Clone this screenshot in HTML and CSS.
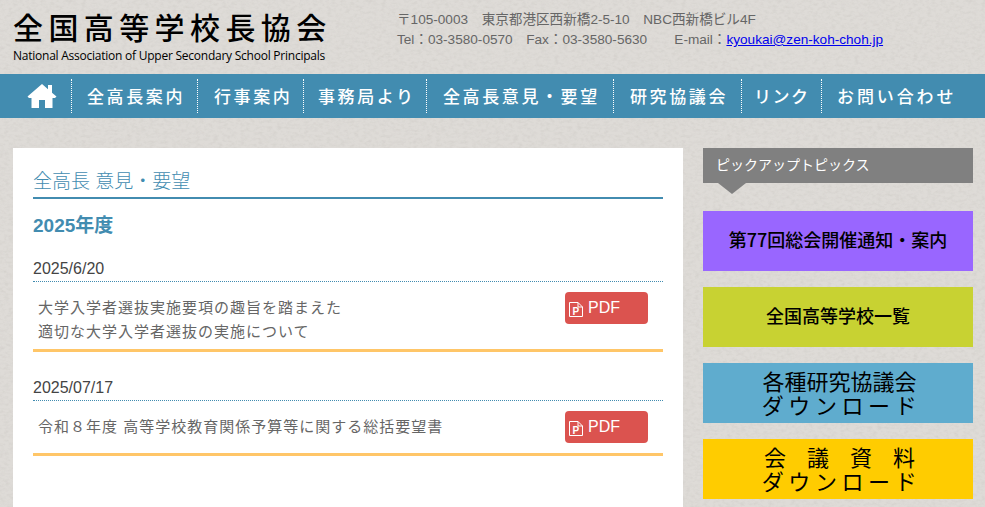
FILE: index.html
```html
<!DOCTYPE html>
<html lang="ja">
  <head>
    <meta charset="UTF-8">
    <title>全国高等学校長協会</title>
    <link rel="stylesheet" href="styles.css">
  </head>
  <body>
    <header class="masthead">
      <div class="logo">
        <div class="logo-name">全国高等学校長協会</div>
        <div class="logo-sub">National Association of Upper Secondary School Principals</div>
      </div>
      <address class="contact">
        <p>〒105-0003　東京都港区西新橋2-5-10　NBC西新橋ビル4F</p>
        <p>Tel：03-3580-0570　Fax：03-3580-5630　　E-mail：<a href="#">kyoukai@zen-koh-choh.jp</a></p>
      </address>
    </header>

    <nav class="gnav">
      <a class="gnav-home" href="#" aria-label="ホーム">
        <svg width="30" height="26" viewBox="0 0 30 26"><path fill="#fff" d="M15 1 L21 6.2 V2 H25 V9.7 L29.5 13.6 L28 15 H25.5 V25 H18 V17 H12 V25 H4.5 V15 H2 L.5 13.6 Z"/></svg>
      </a>
      <a class="gnav-item w1" href="#">全高長案内</a>
      <a class="gnav-item w2" href="#">行事案内</a>
      <a class="gnav-item w3" href="#">事務局より</a>
      <a class="gnav-item w4" href="#">全高長意見・要望</a>
      <a class="gnav-item w5" href="#">研究協議会</a>
      <a class="gnav-item w6" href="#">リンク</a>
      <a class="gnav-item w7" href="#">お問い合わせ</a>
    </nav>

    <div class="wrap">
      <main class="content">
        <h1 class="page-title">全高長 意見・要望</h1>
        <h2 class="year">2025年度</h2>

        <h3 class="date">2025/6/20</h3>
        <div class="entry">
          <p class="entry-text">大学入学者選抜実施要項の趣旨を踏まえた<br>適切な大学入学者選抜の実施について</p>
          <a class="pdf" href="#">
            <svg class="pdf-icon" width="14" height="15" viewBox="0 0 14 15"><path fill="none" stroke="#fff" d="M.5 .5 H9 L13.5 5 V14.5 H.5 Z M9 .5 V5 H13.5"/><text x="3.5" y="12.5" font-family="Liberation Sans" font-size="10" font-weight="700" fill="#fff">P</text></svg>
            PDF
          </a>
        </div>

        <h3 class="date date-next">2025/07/17</h3>
        <div class="entry entry-short">
          <p class="entry-text">令和８年度 高等学校教育関係予算等に関する総括要望書</p>
          <a class="pdf" href="#">
            <svg class="pdf-icon" width="14" height="15" viewBox="0 0 14 15"><path fill="none" stroke="#fff" d="M.5 .5 H9 L13.5 5 V14.5 H.5 Z M9 .5 V5 H13.5"/><text x="3.5" y="12.5" font-family="Liberation Sans" font-size="10" font-weight="700" fill="#fff">P</text></svg>
            PDF
          </a>
        </div>
      </main>

      <aside class="side">
        <div class="side-title">ピックアップトピックス</div>
        <a class="banner purple" href="#">第77回総会開催通知・案内</a>
        <a class="banner olive" href="#">全国高等学校一覧</a>
        <a class="banner blue big" href="#">各種研究協議会<br><span class="wide">ダウンロード</span></a>
        <a class="banner yellow big" href="#"><span class="wider">会議資料</span><br><span class="wide">ダウンロード</span></a>
      </aside>
    </div>
  </body>
</html>
```

FILE: styles.css
```css
html { margin: 0; padding: 0; height: 100%; overflow: hidden; }
body {
  margin: 0;
  height: 100%;
  overflow: hidden;
  color: #666;
  background-color: #dedbd7;
  background-image: url("data:image/svg+xml,%3Csvg xmlns='http://www.w3.org/2000/svg' width='300' height='300'%3E%3Cfilter id='n'%3E%3CfeTurbulence type='fractalNoise' baseFrequency='.22 .34' numOctaves='3' seed='4'/%3E%3CfeColorMatrix values='0 0 0 0 .5 0 0 0 0 .48 0 0 0 0 .45 .35 .35 0 0 -.3'/%3E%3C/filter%3E%3Crect width='300' height='300' filter='url(%23n)'/%3E%3C/svg%3E");
  font-family: "Liberation Sans", "Noto Sans CJK JP", sans-serif;
  font-size: 14px;
}
a { text-decoration: none; }
p, h1, h2, h3 { margin: 0; font-weight: normal; }

.masthead { display: flex; height: 74px; box-sizing: border-box; padding-left: 13px; }
.logo { width: 384px; color: #000; }
.logo-name {
  padding-top: 8px;
  height: 37px;
  font-family: "Noto Sans CJK JP", sans-serif;
  font-size: 30px;
  font-weight: 500;
  line-height: 37px;
  letter-spacing: 5.4px;
  white-space: nowrap;
}
.logo-sub { padding-top: 3px; font-family: "Open Sans", sans-serif; font-size: 12px; line-height: 16px; letter-spacing: -.24px; white-space: nowrap; }
.contact { padding-top: 10px; font-size: 13.6px; font-style: normal; line-height: 20px; white-space: nowrap; }
.contact a { color: #00e; text-decoration: underline; }

.gnav { display: flex; height: 44px; align-items: center; background: #428cb0; }
.gnav-home { display: flex; align-items: center; justify-content: center; box-sizing: border-box; width: 71px; padding-left: 13px; height: 34px; }
.gnav-item {
  box-sizing: border-box;
  height: 34px;
  line-height: 34px;
  border-left: 1px dotted #fff;
  padding-left: 15px;
  color: #fff;
  font-family: "Noto Sans CJK JP", sans-serif;
  font-size: 17px;
  font-weight: 500;
  letter-spacing: 2.6px;
  white-space: nowrap;
}
.w1 { width: 126px; }
.w2 { width: 106px; padding-left: 16px; }
.w3 { width: 123px; padding-left: 14px; }
.w4 { width: 187px; padding-left: 16px; }
.w5 { width: 128px; padding-left: 16px; }
.w6 { width: 80px; letter-spacing: 1.5px; padding-left: 12px; }
.w7 { flex: 1; letter-spacing: 2.9px; }

.wrap { display: flex; align-items: flex-start; gap: 20px; padding: 30px 0 0 13px; }
.content { box-sizing: border-box; width: 670px; height: 359px; padding: 20px 20px 0; background: #fff; }
.page-title {
  height: 29px;
  border-bottom: 2px solid #428cb0;
  color: #428cb0;
  font-size: 19px;
  line-height: 28px;
  font-weight: 300;
}
.year { margin-top: 14px; color: #428cb0; font-size: 19px; font-weight: 700; line-height: 26px; }
.date { margin-top: 18px; height: 24px; border-bottom: 1px dotted #428cb0; color: #444; font-size: 16px; line-height: 24px; }
.date-next { margin-top: 24px; }
.entry { display: flex; justify-content: space-between; height: 67px; padding: 0 15px 0 5px; border-bottom: 3px solid #ffc668; }
.entry-short { height: 52px; }
.entry-text { padding-top: 14px; color: #666; font-size: 15px; line-height: 24px; letter-spacing: 1px; }
.pdf {
  display: flex;
  align-items: center;
  gap: 5px;
  box-sizing: border-box;
  width: 83px;
  height: 32px;
  margin-top: 10px;
  padding-left: 4px;
  border-radius: 4px;
  background: #db534f;
  color: #fff;
  font-size: 16px;
}
.pdf-icon { margin-top: 2px; }

.side { width: 270px; flex: none; }
.side-title {
  position: relative;
  height: 35px;
  margin-bottom: 28px;
  padding-left: 13px;
  background: #808080;
  color: #fff;
  font-size: 14px;
  line-height: 34px;
}
.side-title::after {
  content: "";
  position: absolute;
  left: 15px;
  top: 35px;
  border-top: 11px solid #808080;
  border-left: 14px solid transparent;
  border-right: 14px solid transparent;
}
.banner {
  display: flex;
  flex-direction: column;
  justify-content: center;
  box-sizing: border-box;
  height: 60px;
  margin-bottom: 16px;
  padding-bottom: 4px;
  color: #000;
  font-family: "Noto Sans CJK JP", sans-serif;
  font-size: 18px;
  font-weight: 500;
  line-height: 24px;
  text-align: center;
}
.banner:last-child { margin-bottom: 0; }
.banner br { display: none; }
.big { padding-left: 3px; padding-bottom: 2px; font-size: 22px; font-weight: 400; }
.wide { letter-spacing: 4.6px; margin-right: -4px; }
.wider { letter-spacing: 21px; margin-right: -21px; }
.purple { background: #96f; }
.olive { background: #c8d232; }
.blue { background: #5facce; }
.yellow { background: #fc0; }
```
